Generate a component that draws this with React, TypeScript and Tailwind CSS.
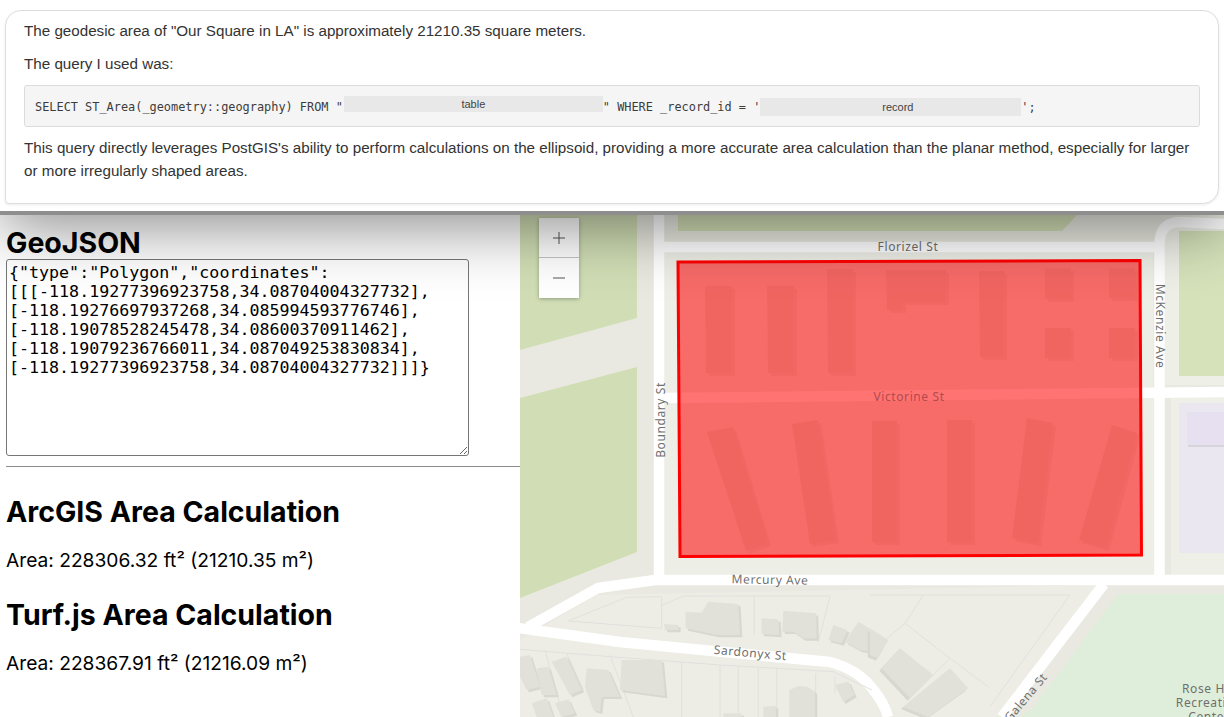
import React from "react";

const GEO = `{"type":"Polygon","coordinates":
[[[-118.19277396923758,34.08704004327732],
[-118.19276697937268,34.085994593776746],
[-118.19078528245478,34.08600370911462],
[-118.19079236766011,34.087049253830834],
[-118.19277396923758,34.08704004327732]]]}`;

const topBuildings = [
  "705,286 732,286 732,373 706,373",
  "767,286 794,286 794,373 768,373",
  "827,269 853,269 853,373 828,373",
  "886,270 946,270 946,302 903,302 903,310 887,310",
  "979,271 1004,271 1004,357 980,357",
  "1045,268 1071,268 1071,299 1045,299",
  "1109,268 1135,268 1135,298 1109,298",
  "1045,328 1071,328 1071,358 1045,358",
  "1109,328 1135,328 1135,358 1109,358",
  "707,432 733,427 768,543 746,551",
  "792,424 818,420 836,540 810,544",
  "872,421 897,421 897,542 872,542",
  "947,420 972,420 972,542 947,542",
  "1027,418 1053,423 1038,543 1012,538",
  "1112,425 1137,433 1106,548 1079,540",
];

const z6Buildings = [
  "432,492 475,495 475,510 435,510",
  "497,455 545,458 565,425 655,432 660,525 590,525 497,505",
  "725,475 775,478 778,525 725,522",
  "790,452 888,460 890,535 850,535 820,515 787,515",
  "940,495 982,510 965,550 925,540",
  "1015,485 1056,510 1056,575 1020,570 975,545",
  "0,590 30,585 60,680 20,690 0,650",
  "50,625 85,620 110,705 65,705",
  "95,605 140,590 185,690 150,705",
  "200,625 265,630 300,710 245,710 240,755 220,750 195,680",
  "305,600 425,600 435,708 300,690",
  "35,730 80,715 100,771 50,771",
  "105,730 145,718 165,760 125,771",
  "945,675 985,665 1003,705 970,725",
  "808,690 835,678 862,680 885,695 885,771 808,771",
  "730,740 768,738 768,771 730,771",
  "610,760 665,760 665,771 610,771",
];

const z6Lines = [
  "145,483 320,412 425,410 425,505 145,483",
  "425,437 490,408 930,408",
  "703,410 703,525",
  "930,410 895,545",
  "0,568 270,590 600,615 940,635 1056,690",
  "270,585 340,771",
  "485,605 485,771",
  "600,615 600,771",
  "655,620 655,771",
  "715,622 715,771",
  "770,625 770,771",
  "887,640 887,700",
  "945,650 945,700",
  "75,570 130,771",
  "140,580 190,690",
];

const z7Buildings = [
  "0,505 55,540 25,595 0,585",
  "90,565 190,645 120,715 35,625",
  "240,625 295,685 175,771 100,740",
];

const z7Lines = [
  "160,405 105,490 45,540",
  "105,490 240,595 185,650",
  "240,595 355,680",
  "0,405 600,405 360,740",
];

function MapCanvas() {
  return (
    <svg width="704" height="717" viewBox="520 0 704 717" className="block">
      <rect x="520" y="0" width="704" height="717" fill="#e9e9e1" />
      <polygon points="664,252 1153,252 1153,392 664,398" fill="#edeee6" />
      <polygon points="664,403 1160,397 1160,575 664,575" fill="#edeee6" />
      <polygon points="597,595 1103,585 1010,717 520,717 520,640" fill="#edede6" />
      <rect x="1165" y="225" width="59" height="160" fill="#eeefe7" />
      <rect x="1171" y="397" width="53" height="178" fill="#eeefe7" />
      <polygon points="520,215 637,215 637,318 520,350" fill="#d1deb5" />
      <polygon points="520,398 637,367 637,552 520,598" fill="#d1deb5" />
      <polygon points="678,215 1077,215 1062,231 678,231" fill="#d1deb5" />
      <rect x="1179" y="231" width="45" height="145" fill="#d5e2ba" />
      <polygon points="1118,594 1224,594 1224,717 1020,717 1033,708" fill="#dfeeda" />
      <rect x="1179" y="403" width="45" height="150" fill="#ebe7f0" />
      <rect x="1188" y="413" width="36" height="34" fill="#d8d4dc" />
      <rect x="1187" y="412" width="37" height="33" fill="#e6e0f0" />
      <g fill="none" stroke="#ffffff" strokeWidth="10.5" strokeLinejoin="round">
        <path d="M659 200V575" />
        <path d="M659 247H1159" />
        <path d="M1159.500 575V245Q1159.500 222 1180 222L1224 224" />
        <path d="M664 398L1224 392" />
        <path d="M1224 580H655L598 588L528 627" />
        <path d="M518 628L620 642L713 651L830 662Q860 670 875 692Q885 705 888 717" />
        <path d="M1104 584L1002 717" />
      </g>
      <g transform="translate(520 460) scale(0.3333)" fill="none" stroke="#dfe1de" strokeWidth="3">
        {z6Lines.map((p) => (
          <polyline key={p} points={p} />
        ))}
      </g>
      <g transform="translate(870 460) scale(0.3333)" fill="none" stroke="#dfe1de" strokeWidth="3">
        {z7Lines.map((p) => (
          <polyline key={p} points={p} />
        ))}
      </g>
      <g transform="translate(520 460) scale(0.3333)">
        {z6Buildings.map((p) => (
          <g key={p}>
            <polygon points={p} fill="#d8d8d0" transform="translate(7 7)" />
            <polygon points={p} fill="#e1e1da" />
          </g>
        ))}
      </g>
      <g transform="translate(870 460) scale(0.3333)">
        {z7Buildings.map((p) => (
          <g key={p}>
            <polygon points={p} fill="#d8d8d0" transform="translate(-7 7)" />
            <polygon points={p} fill="#e1e1da" />
          </g>
        ))}
      </g>
      {topBuildings.map((p) => (
        <g key={p}>
          <polygon points={p} fill="#e2e3db" transform="translate(3 3)" />
          <polygon points={p} fill="#dfdfd7" />
        </g>
      ))}
      <polygon
        points="678,262 1140,260.500 1141.500,555 680,556.500"
        fill="#ff0000"
        fillOpacity="0.55"
        stroke="#ff0000"
        strokeWidth="3"
      />
      <g fontFamily="'Noto Sans', sans-serif" fontSize="12" fill="#6f6f6f" textAnchor="middle" letterSpacing="0.6">
        <text x="908" y="251">Florizel St</text>
        <text x="0" y="0" transform="translate(665 420) rotate(-90)">Boundary St</text>
        <text x="0" y="0" transform="translate(1156 326) rotate(90)">McKenzie Ave</text>
        <text x="909" y="401" fill="#b24b4b">Victorine St</text>
        <text x="770" y="584" transform="rotate(1 770 584)">Mercury Ave</text>
        <text x="750" y="657" transform="rotate(5 750 657)">Sardonyx St</text>
        <text x="0" y="0" transform="translate(1029 700) rotate(-50)">Galena St</text>
        <text x="1209" y="693">Rose Hill</text>
        <text x="1209" y="707">Recreation</text>
        <text x="1209" y="721">Center</text>
      </g>
    </svg>
  );
}

function ZoomControl() {
  return (
    <div className="absolute left-[19px] top-[218px] flex w-10 flex-col bg-white shadow-[0_1px_4px_rgba(0,0,0,0.3)]">
      <div className="flex h-10 items-center justify-center border-b border-[#c4c4c4] bg-white">
        <svg width="12" height="12" viewBox="0 0 12 12" fill="none" stroke="#555" strokeWidth="1">
          <path d="M0 6H12M6 0V12" />
        </svg>
      </div>
      <div className="flex h-10 items-center justify-center bg-white">
        <svg width="12" height="12" viewBox="0 0 12 12" fill="none" stroke="#555" strokeWidth="1">
          <path d="M0 6H12" />
        </svg>
      </div>
    </div>
  );
}

function Redacted({ label, width, cls }: { label: string; width: string; cls: string }) {
  return (
    <span
      className={`inline-flex items-center justify-center bg-[#e8e8e8] align-middle font-['Liberation_Sans',sans-serif] text-[11px] text-[#444] ${width} ${cls}`}
    >
      {label}
    </span>
  );
}

function ChatOverlay() {
  return (
    <div className="absolute inset-x-0 top-0 h-[215px] border-b-4 border-[#8e8e8e] bg-white pl-[5px] pr-[5px] pt-[10px] shadow-[0_12px_60px_rgba(0,0,0,0.45)]">
      <div className="h-[194px] rounded-tl-2xl rounded-tr-2xl rounded-br-2xl rounded-bl-[4px] border border-[#dedede] bg-white px-[18px] pt-[8px] font-['Liberation_Sans',sans-serif] text-[15.2px] leading-[23px] text-[#333] shadow-[0_1px_3px_rgba(0,0,0,0.08)]">
        <p>The geodesic area of "Our Square in LA" is approximately 21210.35 square meters.</p>
        <p className="mt-[10px]">The query I used was:</p>
        <pre className="mt-[10px] flex h-[42px] items-center rounded-[3px] border border-[#dcdcdc] bg-[#f5f5f5] pl-[10px] pt-[2px] font-['DejaVu_Sans_Mono',monospace] text-[11.9px] text-[#3c3c3c]">
          <span className="whitespace-pre">
            {'SELECT ST_Area(_geometry::geography) FROM "'}
            <Redacted label="table" width="ml-[1px] w-[259px] h-4" cls="-translate-y-[3px]" />
            {'" WHERE _record_id = \''}
            <Redacted label="record" width="w-[261px] h-[18px] pl-[14px]" cls="" />
            {"';"}
          </span>
        </pre>
        <p className="mt-[9px]">
          This query directly leverages PostGIS's ability to perform calculations on the ellipsoid, providing a more accurate area calculation than the planar method, especially for larger or more irregularly shaped areas.
        </p>
      </div>
    </div>
  );
}

export default function App() {
  return (
    <div className="relative flex h-[717px] w-[1224px] overflow-hidden bg-white font-['Inter',sans-serif] text-black">
      <div className="w-[520px] shrink-0 pl-[6px] pt-[227px]">
        <h2 className="text-[28.5px] font-bold leading-[32px]">GeoJSON</h2>
        <textarea
          readOnly
          value={GEO}
          className="block h-[197px] w-[463px] rounded-[3px] border border-[#767676] bg-white px-[2px] pt-[3px] font-['DejaVu_Sans_Mono',monospace] text-[16.65px] leading-[19px] text-black"
        />
        <hr className="mt-[10px] border-t border-[#8c8c8c]" />
        <h2 className="mt-[28px] text-[28.5px] font-bold leading-[34px]">ArcGIS Area Calculation</h2>
        <p className="mt-[20px] text-[19.2px] leading-[22px]">Area: 228306.32 ft² (21210.35 m²)</p>
        <h2 className="mt-[27px] text-[28.5px] font-bold leading-[34px]">Turf.js Area Calculation</h2>
        <p className="mt-[20px] text-[19.2px] leading-[22px]">Area: 228367.91 ft² (21216.09 m²)</p>
      </div>
      <div className="relative flex-1">
        <MapCanvas />
        <ZoomControl />
      </div>
      <ChatOverlay />
    </div>
  );
}
